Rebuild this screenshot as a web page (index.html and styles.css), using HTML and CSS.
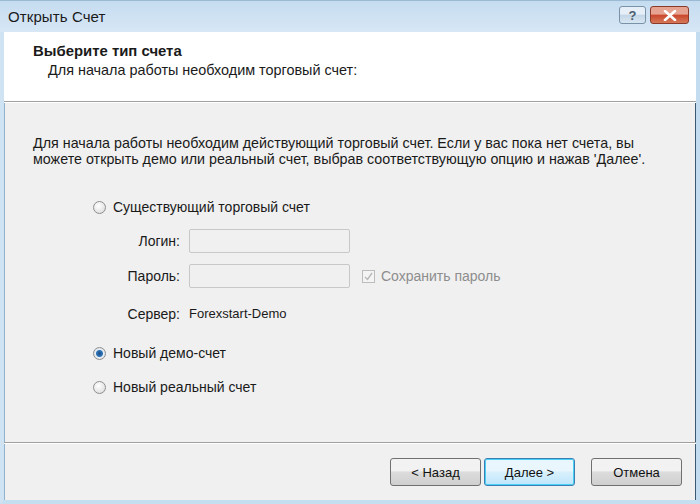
FILE: index.html
```html
<!DOCTYPE html>
<html lang="ru">

<head>
    <meta charset="UTF-8">
    <title>Открыть Счет</title>
    <link rel="stylesheet" href="styles.css">
</head>

<body>
    <div class="window">
        <div class="titlebar">
            <span class="title">Открыть Счет</span>
            <div class="caption-buttons">
                <span class="cap-btn help">?</span>
                <span class="cap-btn close">
                    <svg width="14" height="11" viewBox="0 0 14 11">
                        <path d="M2 1 L12 10 M12 1 L2 10" stroke="#fff" stroke-width="2.6" stroke-linecap="round" />
                    </svg>
                </span>
            </div>
        </div>

        <div class="header">
            <div class="header-title">Выберите тип счета</div>
            <div class="header-sub">Для начала работы необходим торговый счет:</div>
        </div>

        <div class="content">
            <p class="intro">Для начала работы необходим действующий торговый счет. Если у вас пока нет счета, вы
                можете открыть демо или реальный счет, выбрав соответствующую опцию и нажав 'Далее'.</p>

            <div class="options">
                <label class="radio-row">
                    <span class="radio"></span>
                    Существующий торговый счет
                </label>

                <div class="account-grid">
                    <span class="field-label">Логин:</span>
                    <span class="textbox"></span>
                    <span></span>

                    <span class="field-label">Пароль:</span>
                    <span class="textbox"></span>
                    <span class="save-pass">
                        <span class="checkbox">
                            <svg width="11" height="11" viewBox="0 0 11 11">
                                <path d="M2 6 L4.5 8.5 L9 2" fill="none" stroke="#b8b8b8" stroke-width="1.4" />
                            </svg>
                        </span>
                        Сохранить пароль
                    </span>

                    <span class="field-label server-row">Сервер:</span>
                    <span class="server server-row">Forexstart-Demo</span>
                    <span></span>
                </div>

                <label class="radio-row demo">
                    <span class="radio checked"></span>
                    Новый демо-счет
                </label>
                <label class="radio-row">
                    <span class="radio"></span>
                    Новый реальный счет
                </label>
            </div>
        </div>

        <div class="footer">
            <button type="button" class="btn">&lt; Назад</button>
            <button type="button" class="btn default">Далее &gt;</button>
            <button type="button" class="btn cancel">Отмена</button>
        </div>
    </div>
</body>

</html>
```

FILE: styles.css
```css
body {
    margin: 0;
    padding: 0;
    font-family: 'Liberation Sans', Arial, sans-serif;
    font-size: 14px;
    color: #1a1a1a;
    background-color: #ffffff;
}

.window {
    width: 700px;
    height: 504px;
    box-sizing: border-box;
    display: flex;
    flex-direction: column;
    background-color: #f0f0f0;
    border-left: 4px solid #cfe3f3;
    border-right: 4px solid #c3dcef;
    border-bottom: 4px solid #c6dff0;
    box-shadow: inset -1px 0 0 #3b5a72, inset 1px 0 0 #8fb3cf;
}

/* title bar */
.titlebar {
    height: 32px;
    margin: 0 -4px;
    padding: 0 8px;
    display: flex;
    align-items: center;
    justify-content: space-between;
    background: linear-gradient(#c5dcf0, #d7e7f5);
    border-top: 1px solid #9cbad3;
    box-sizing: border-box;
}

.title {
    font-size: 15px;
    letter-spacing: 0.1px;
    color: #1b1b1b;
}

.caption-buttons {
    display: flex;
    gap: 4px;
    margin-top: -3px;
    margin-right: 3px;
}

.cap-btn {
    height: 18px;
    display: flex;
    align-items: center;
    justify-content: center;
    border: 1px solid #7a92a8;
    border-radius: 3px;
    box-sizing: border-box;
}

.cap-btn.help {
    width: 27px;
    background: linear-gradient(#e6eff7 45%, #c4d6e6 50%, #d7e6f2);
    color: #4b5d6d;
    font-weight: bold;
    font-size: 13px;
}

.cap-btn.close {
    width: 39px;
    background: linear-gradient(#e7a391 45%, #c9462c 50%, #d5795a);
    border-color: #8b3a2a;
}

/* header */
.header {
    height: 70px;
    background-color: #ffffff;
    border-bottom: 1px solid #a0a0a0;
    box-shadow: 0 1px 0 #ffffff;
    padding: 11px 0 0 29px;
    box-sizing: border-box;
}

.header-title {
    font-weight: bold;
    font-size: 14.9px;
    line-height: 17px;
}

.header-sub {
    margin-top: 2px;
    padding-left: 15px;
    font-size: 14.4px;
    line-height: 16px;
}

/* content */
.content {
    flex: 1;
    padding: 0 0 0 29px;
}

.intro {
    margin: 33px 0 0 0;
    max-width: 615px;
    font-size: 14.3px;
    line-height: 16px;
}

.options {
    margin: 31px 0 0 60px;
}

.radio-row {
    display: flex;
    align-items: center;
    gap: 7px;
    height: 18px;
}

.radio {
    width: 11px;
    height: 11px;
    border-radius: 50%;
    border: 1px solid #8e8f8f;
    background: radial-gradient(circle at 40% 35%, #ffffff, #d6d6d6);
}

.radio.checked {
    background: radial-gradient(circle, #1f4f86 0, #2c73b8 3px, #e8eef4 4px, #d0d6dc);
}

.account-grid {
    display: grid;
    grid-template-columns: 87px 161px auto;
    column-gap: 9px;
    row-gap: 11px;
    align-items: center;
    margin: 13px 0 0 0;
}

.field-label {
    text-align: right;
}

.textbox {
    height: 24px;
    border: 1px solid #c8c8c8;
    border-radius: 2px;
    background-color: #f0f0f0;
    box-sizing: border-box;
}

.server {
    font-size: 13px;
    line-height: 24px;
}

.server-row {
    padding-top: 3px;
}

.save-pass {
    display: flex;
    align-items: center;
    gap: 6px;
    color: #8d8d8d;
    margin-left: 3px;
}

.checkbox {
    width: 13px;
    height: 13px;
    border: 1px solid #bcbcbc;
    box-sizing: border-box;
    display: flex;
    align-items: center;
    justify-content: center;
    background-color: #f4f4f4;
}

.radio-row.demo {
    margin-top: 18px;
}

.radio-row.demo + .radio-row {
    margin-top: 16px;
}

/* footer */
.footer {
    height: 58px;
    border-top: 1px solid #a0a0a0;
    box-shadow: inset 0 1px 0 #ffffff;
    display: flex;
    justify-content: flex-end;
    align-items: flex-start;
    padding: 15px 14px 0 0;
    box-sizing: border-box;
    gap: 3px;
}

.btn {
    width: 91px;
    height: 28px;
    font-family: 'Liberation Sans', Arial, sans-serif;
    font-size: 13px;
    color: #111;
    border: 1px solid #707070;
    border-radius: 3px;
    background: linear-gradient(#f2f2f2 45%, #dcdcdc 50%, #cfcfcf);
}

.btn.default {
    border-color: #3c7fb1;
    box-shadow: inset 0 0 0 1px #48d0f7;
    background: linear-gradient(#eaf6fd 45%, #d9f0fc 50%, #bee6fd);
}

.btn.cancel {
    margin-left: 13px;
}
```
